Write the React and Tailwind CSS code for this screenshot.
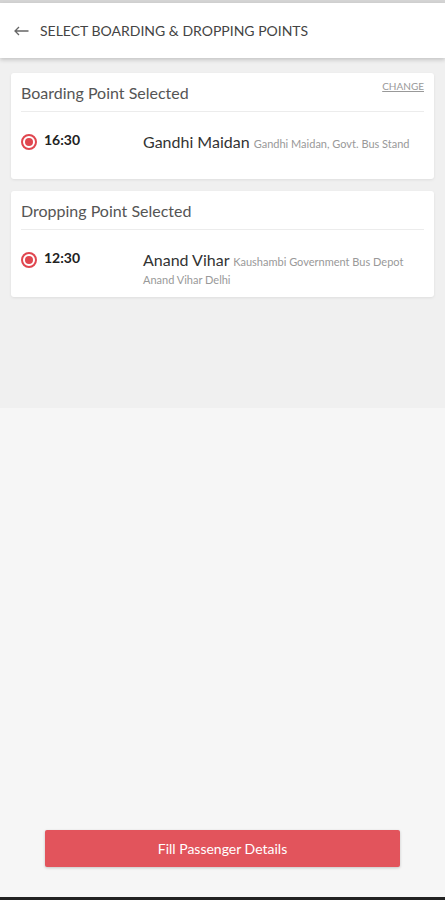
import React from 'react';

const RadioDot = () => (
    <span className="mt-[2px] flex h-[16px] w-[16px] shrink-0 items-center justify-center rounded-full border-[2px] border-[#e0464f] bg-white">
        <span className="h-[8px] w-[8px] rounded-full bg-[#e0464f]" />
    </span>
);

const PointCard = ({ title, time, name, address, showChange }) => (
    <div className="rounded-[3px] bg-white px-[10px] shadow-[0_1px_3px_rgba(0,0,0,0.08)]">
        <div className="flex items-start justify-between border-b border-[#ececec] pt-[10px] pb-[8px]">
            <span className="text-[16px] leading-[20px] text-[#555]">{title}</span>
            {showChange && (
                <span className="mt-[-3px] text-[10px] leading-[12px] text-[#999] underline">CHANGE</span>
            )}
        </div>
        <div className="flex h-[67px] items-start pt-[20px]">
            <RadioDot />
            <span className="ml-[7px] w-[99px] shrink-0 text-[14px] font-bold leading-[16px] text-[#222]">{time}</span>
            <p className="mt-[1px] text-[16px] leading-[18px] text-[#333]">
                {name} <span className="text-[11px] leading-[12px] text-[#999]">{address}</span>
            </p>
        </div>
    </div>
);

const App = () => {
    return (
        <div className="flex min-h-[900px] flex-col bg-[#f6f6f6] font-['Lato','Noto_Sans',sans-serif]">
            <div className="h-[3px] bg-[#d4d4d4]" />
            <header className="relative z-10 flex h-[55px] items-center gap-[11px] bg-white px-[14px] shadow-[0_2px_4px_rgba(0,0,0,0.18)]">
                <svg width="15" height="10" viewBox="0 0 15 10" fill="none" stroke="#666" strokeWidth="1.3">
                    <path d="M14.5 5H1M5 1L1 5l4 4" />
                </svg>
                <h1 className="text-[14px] uppercase text-[#444]">Select Boarding &amp; Dropping Points</h1>
            </header>

            <section className="flex h-[350px] flex-col gap-[12px] bg-[#f0f0f0] px-[11px] pt-[15px]">
                <PointCard
                    title="Boarding Point Selected"
                    time="16:30"
                    name="Gandhi Maidan"
                    address="Gandhi Maidan, Govt. Bus Stand"
                    showChange
                />
                <PointCard
                    title="Dropping Point Selected"
                    time="12:30"
                    name="Anand Vihar"
                    address="Kaushambi Government Bus Depot Anand Vihar Delhi"
                />
            </section>

            <div className="flex flex-1 flex-col justify-end px-[45px] pb-[30px]">
                <button className="h-[37px] w-full rounded-[2px] bg-[#e2545c] text-[14px] text-white shadow-[0_1px_3px_rgba(0,0,0,0.2)]">
                    Fill Passenger Details
                </button>
            </div>
            <div className="h-[3px] bg-[#222]" />
        </div>
    );
};

export default App;
